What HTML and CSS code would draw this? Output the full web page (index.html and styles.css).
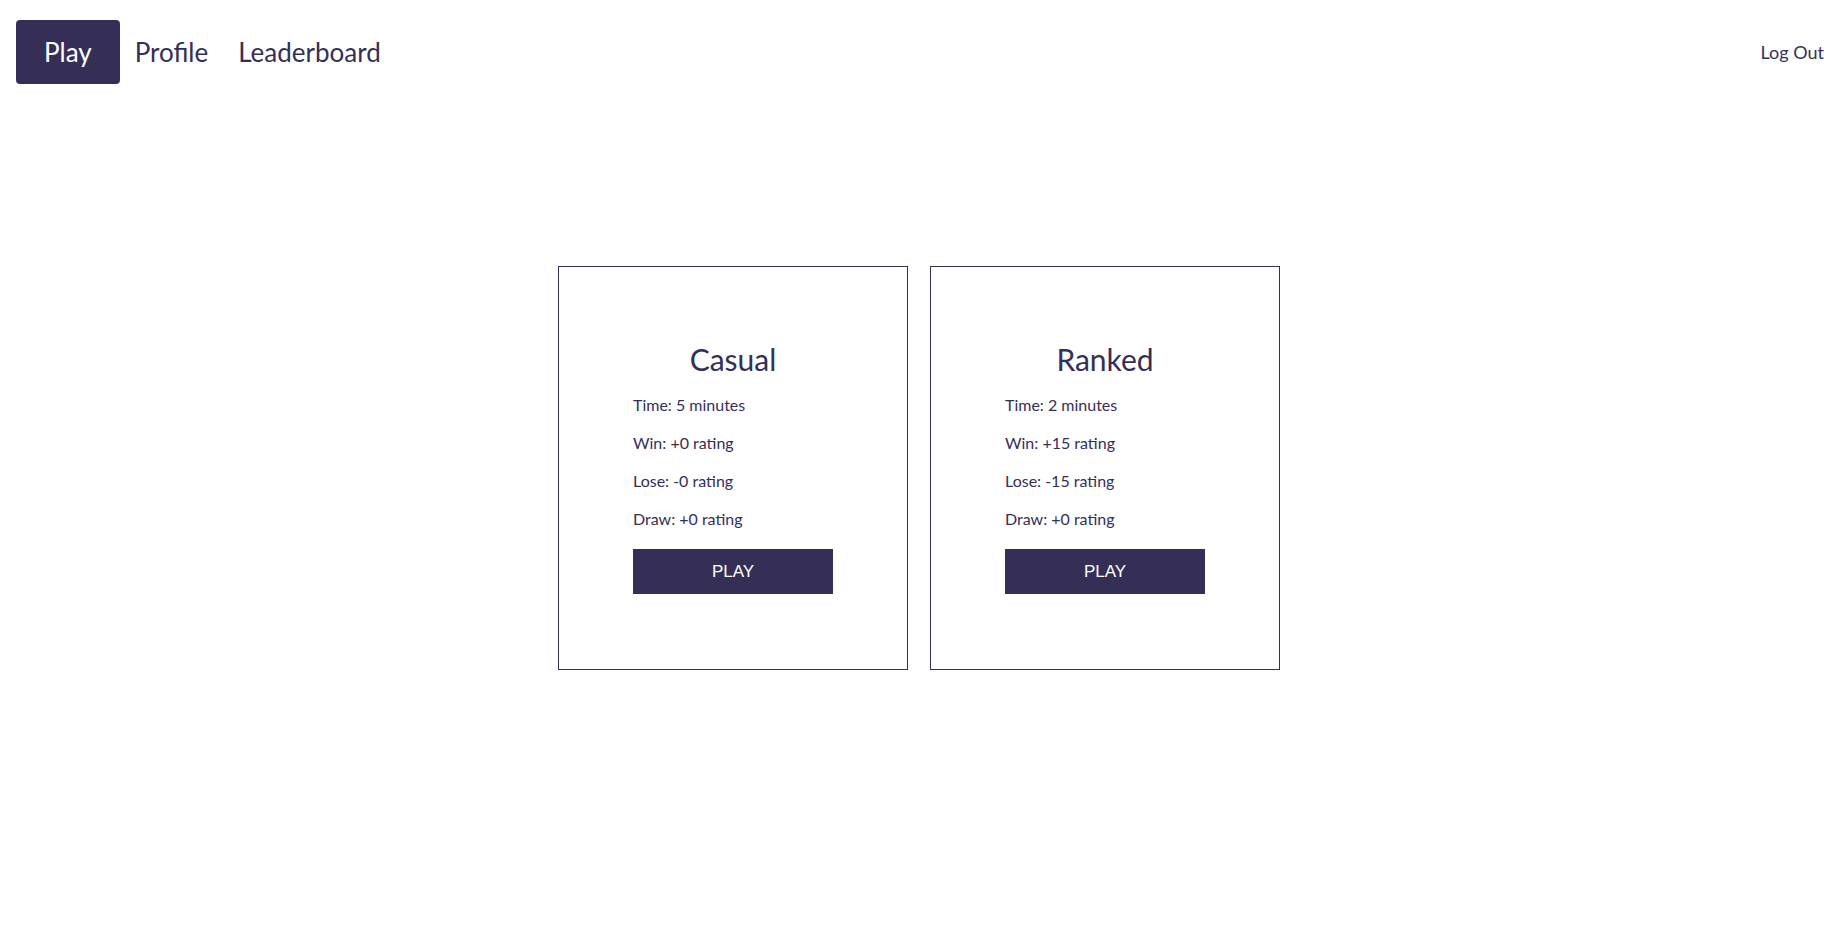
FILE: index.html
```html
<!DOCTYPE html>
<html lang="en">
<head>
  <meta charset="UTF-8">
  <meta name="viewport" content="width=device-width, initial-scale=1.0">
  <title>Play</title>
  <link rel="stylesheet" href="styles.css">
</head>
<body>

<header class="topbar">
  <nav class="nav">
    <a href="#" class="nav-link active">Play</a>
    <a href="#" class="nav-link">Profile</a>
    <a href="#" class="nav-link">Leaderboard</a>
  </nav>
  <a href="#" class="logout">Log Out</a>
</header>

<main class="modes">
  <!-- Casual -->
  <div class="mode-card">
    <div class="mode-body">
      <h2>Casual</h2>
      <p>Time: 5 minutes</p>
      <p>Win: +0 rating</p>
      <p>Lose: -0 rating</p>
      <p>Draw: +0 rating</p>
      <button type="button">PLAY</button>
    </div>
  </div>

  <!-- Ranked -->
  <div class="mode-card">
    <div class="mode-body">
      <h2>Ranked</h2>
      <p>Time: 2 minutes</p>
      <p>Win: +15 rating</p>
      <p>Lose: -15 rating</p>
      <p>Draw: +0 rating</p>
      <button type="button">PLAY</button>
    </div>
  </div>
</main>

</body>
</html>
```

FILE: styles.css
```css
body {
  font-family: Lato, "Open Sans", sans-serif;
  background-color: #fff;
  color: #352f57;
  margin: 0;
  padding: 0;
}
a {
  color: #352f57;
  text-decoration: none;
}
.topbar {
  display: flex;
  justify-content: space-between;
  align-items: center;
  padding: 20px 20px 0 16px;
}
.nav {
  display: flex;
  align-items: center;
}
.nav-link {
  display: flex;
  align-items: center;
  height: 64px;
  padding: 0 15px;
  font-size: 26px;
}
.nav-link.active {
  background-color: #352f57;
  color: #fff;
  border-radius: 4px;
  padding: 0 28px;
}
.logout {
  font-size: 18px;
}
.modes {
  display: flex;
  justify-content: center;
  gap: 22px;
  margin-top: 182px;
  padding-right: 6px;
}
.mode-card {
  width: 200px;
  padding: 75px 74px;
  border: 1px solid #352f57;
}
.mode-body h2 {
  margin: 0 0 18px;
  font-size: 30px;
  font-weight: normal;
  line-height: 34px;
  text-align: center;
}
.mode-body p {
  margin: 0 0 16px;
  font-size: 16px;
  line-height: 22px;
}
.mode-body button {
  display: block;
  width: 200px;
  height: 45px;
  margin-top: 19px;
  border: none;
  background-color: #352f57;
  color: #fff;
  font-family: "Liberation Sans", Arial, sans-serif;
  font-size: 17px;
  cursor: pointer;
}
```
